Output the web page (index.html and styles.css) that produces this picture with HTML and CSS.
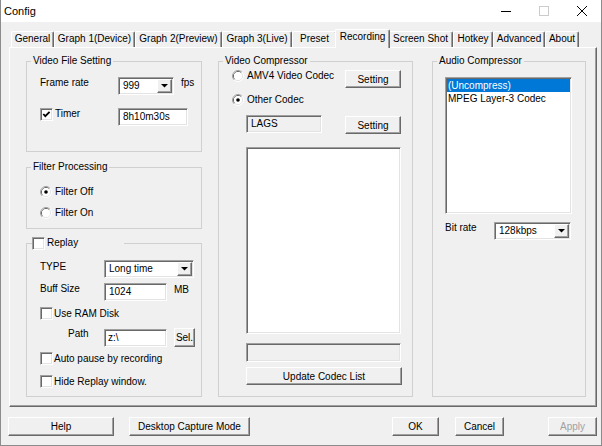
FILE: index.html
```html
<!DOCTYPE html>
<html>
<head>
<meta charset="utf-8">
<title>Config</title>
<link rel="stylesheet" href="styles.css">
</head>
<body>
<div class="window">
  <div class="titlebar">
    <span class="title">Config</span>
    <div class="controls">
      <span class="ctl"><svg width="10" height="10" viewBox="0 0 10 10"><line x1="0" y1="5.5" x2="10" y2="5.5" stroke="#000" stroke-width="1"/></svg></span>
      <span class="ctl"><svg width="10" height="10" viewBox="0 0 10 10"><rect x="0.5" y="0.5" width="9" height="9" fill="none" stroke="#cccccc" stroke-width="1"/></svg></span>
      <span class="ctl"><svg width="10" height="10" viewBox="0 0 10 10"><path d="M0 0 L10 10 M10 0 L0 10" stroke="#000" stroke-width="1"/></svg></span>
    </div>
  </div>
  <div class="content">
    <div class="tabs">
      <div class="tab t-general">General</div>
      <div class="tab t-graph1">Graph 1(Device)</div>
      <div class="tab t-graph2">Graph 2(Preview)</div>
      <div class="tab t-graph3">Graph 3(Live)</div>
      <div class="tab t-preset">Preset</div>
      <div class="tab t-recording active">Recording</div>
      <div class="tab t-shot">Screen Shot</div>
      <div class="tab t-hotkey">Hotkey</div>
      <div class="tab t-adv">Advanced</div>
      <div class="tab t-about">About</div>
    </div>
    <div class="panel">
      <div class="col-left">
        <fieldset class="group g-vfs">
          <legend>Video File Setting</legend>
          <div class="gbody">
            <div class="row r-rate">
              <span class="lbl w-rate">Frame rate</span>
              <div class="combo sunk c-fps"><span class="cval">999</span><span class="carrow"><svg width="7" height="4" viewBox="0 0 7 4"><polygon points="0,0 7,0 3.5,3.6" fill="#000"/></svg></span></div>
              <span class="lbl unit">fps</span>
            </div>
            <div class="row r-timer">
              <span class="cb sunk"><svg width="9" height="9" viewBox="0 0 9 9"><polyline points="1.3,4 3.3,6.2 7.6,1.8" fill="none" stroke="#000" stroke-width="1.8"/></svg></span>
              <span class="lbl cbl w-timer">Timer</span>
              <div class="edit sunk e-timer">8h10m30s</div>
            </div>
          </div>
        </fieldset>
        <fieldset class="group g-filter">
          <legend>Filter Processing</legend>
          <div class="gbody">
            <div class="row r-foff">
              <svg class="radio" width="12" height="12" viewBox="0 0 12 12"><path d="M2.11 9.89 A5.5 5.5 0 0 1 9.89 2.11" fill="none" stroke="#a0a0a0"/><path d="M9.89 2.11 A5.5 5.5 0 0 1 2.11 9.89" fill="none" stroke="#ffffff"/><path d="M2.82 9.18 A4.5 4.5 0 0 1 9.18 2.82" fill="none" stroke="#696969"/><path d="M9.18 2.82 A4.5 4.5 0 0 1 2.82 9.18" fill="none" stroke="#e3e3e3"/><circle cx="6" cy="6" r="4" fill="#fff"/><circle cx="6" cy="6" r="1.8" fill="#000"/></svg>
              <span class="lbl rl">Filter Off</span>
            </div>
            <div class="row r-fon">
              <svg class="radio" width="12" height="12" viewBox="0 0 12 12"><path d="M2.11 9.89 A5.5 5.5 0 0 1 9.89 2.11" fill="none" stroke="#a0a0a0"/><path d="M9.89 2.11 A5.5 5.5 0 0 1 2.11 9.89" fill="none" stroke="#ffffff"/><path d="M2.82 9.18 A4.5 4.5 0 0 1 9.18 2.82" fill="none" stroke="#696969"/><path d="M9.18 2.82 A4.5 4.5 0 0 1 2.82 9.18" fill="none" stroke="#e3e3e3"/><circle cx="6" cy="6" r="4" fill="#fff"/></svg>
              <span class="lbl rl">Filter On</span>
            </div>
          </div>
        </fieldset>
        <fieldset class="group g-replay">
          <legend class="lg-replay"><div class="lg-inner"><span class="cb sunk"></span><span class="lbl cbl">Replay</span></div></legend>
          <div class="gbody">
            <div class="row r-type">
              <span class="lbl w-rep lbl-down">TYPE</span>
              <div class="combo sunk c-type"><span class="cval">Long time</span><span class="carrow"><svg width="7" height="4" viewBox="0 0 7 4"><polygon points="0,0 7,0 3.5,3.6" fill="#000"/></svg></span></div>
            </div>
            <div class="row r-buff">
              <span class="lbl w-rep">Buff Size</span>
              <div class="edit sunk e-short">1024</div>
              <span class="lbl unit lbl-down">MB</span>
            </div>
            <div class="row r-ram">
              <span class="cb sunk"></span>
              <span class="lbl cbl cbl-tight">Use RAM Disk</span>
            </div>
            <div class="row r-path">
              <span class="lbl w-path">Path</span>
              <div class="edit sunk e-short e-path">z:\</div>
              <div class="btn b-sel">Sel.</div>
            </div>
            <div class="row r-auto">
              <span class="cb sunk"></span>
              <span class="lbl cbl cbl-tight">Auto pause by recording</span>
            </div>
            <div class="row r-hide">
              <span class="cb sunk"></span>
              <span class="lbl cbl cbl-tight">Hide Replay window.</span>
            </div>
          </div>
        </fieldset>
      </div>
      <fieldset class="group g-vc">
        <legend>Video Compressor</legend>
        <div class="gbody gbody-vc">
          <div class="row r-amv">
            <svg class="radio" width="12" height="12" viewBox="0 0 12 12"><path d="M2.11 9.89 A5.5 5.5 0 0 1 9.89 2.11" fill="none" stroke="#a0a0a0"/><path d="M9.89 2.11 A5.5 5.5 0 0 1 2.11 9.89" fill="none" stroke="#ffffff"/><path d="M2.82 9.18 A4.5 4.5 0 0 1 9.18 2.82" fill="none" stroke="#696969"/><path d="M9.18 2.82 A4.5 4.5 0 0 1 2.82 9.18" fill="none" stroke="#e3e3e3"/><circle cx="6" cy="6" r="4" fill="#fff"/></svg>
            <span class="lbl rl">AMV4 Video Codec</span>
            <div class="btn b-setting">Setting</div>
          </div>
          <div class="row r-other">
            <svg class="radio" width="12" height="12" viewBox="0 0 12 12"><path d="M2.11 9.89 A5.5 5.5 0 0 1 9.89 2.11" fill="none" stroke="#a0a0a0"/><path d="M9.89 2.11 A5.5 5.5 0 0 1 2.11 9.89" fill="none" stroke="#ffffff"/><path d="M2.82 9.18 A4.5 4.5 0 0 1 9.18 2.82" fill="none" stroke="#696969"/><path d="M9.18 2.82 A4.5 4.5 0 0 1 2.82 9.18" fill="none" stroke="#e3e3e3"/><circle cx="6" cy="6" r="4" fill="#fff"/><circle cx="6" cy="6" r="1.8" fill="#000"/></svg>
            <span class="lbl rl">Other Codec</span>
          </div>
          <div class="row r-lags">
            <div class="edit sunk ro e-lags">LAGS</div>
            <div class="btn b-setting b-setting2">Setting</div>
          </div>
          <div class="listbox sunk lb-codec"></div>
          <div class="edit sunk ro e-info"></div>
          <div class="btn b-update">Update Codec List</div>
        </div>
      </fieldset>
      <fieldset class="group g-ac">
        <legend>Audio Compressor</legend>
        <div class="gbody gbody-ac">
          <div class="listbox sunk lb-audio">
            <div class="item sel">(Uncompress)</div>
            <div class="item">MPEG Layer-3 Codec</div>
          </div>
          <div class="row r-bitrate">
            <span class="lbl w-bit">Bit rate</span>
            <div class="combo sunk c-bit"><span class="cval">128kbps</span><span class="carrow"><svg width="7" height="4" viewBox="0 0 7 4"><polygon points="0,0 7,0 3.5,3.6" fill="#000"/></svg></span></div>
          </div>
        </div>
      </fieldset>
    </div>
    <div class="buttons">
      <div class="btn b-help">Help</div>
      <div class="btn b-desktop">Desktop Capture Mode</div>
      <div class="btn b-ok">OK</div>
      <div class="btn b-cancel">Cancel</div>
      <div class="btn b-apply disabled">Apply</div>
    </div>
  </div>
</div>
</body>
</html>
```
FILE: styles.css
```css
html, body {
  margin: 0;
  padding: 0;
}
body {
  background: #f0f0f0;
  font-family: "Liberation Sans", Arial, sans-serif;
  font-size: 10px;
  color: #000;
}
.window {
  width: 602px;
  height: 446px;
  box-sizing: border-box;
  border: 1px solid #8c8c8c;
  border-top: 0;
  background: #f0f0f0;
  overflow: hidden;
}
.titlebar {
  height: 22px;
  background: #fff;
  display: flex;
  align-items: center;
}
.title {
  padding-left: 3px;
  font-size: 11px;
}
.controls {
  margin-left: auto;
  display: flex;
}
.ctl {
  width: 38px;
  height: 22px;
  display: flex;
  align-items: center;
  justify-content: center;
}
.content {
  padding: 7px 4px 0 8px;
}

/* tabs */
.tabs {
  display: flex;
  align-items: flex-end;
  height: 18px;
  margin-left: 2px;
  position: relative;
  z-index: 1;
}
.tab {
  height: 16px;
  box-sizing: border-box;
  border-top: 1px solid #fff;
  border-left: 1px solid #fff;
  border-right: 1px solid #696969;
  box-shadow: inset -1px 0 #a0a0a0;
  border-radius: 2px 2px 0 0;
  line-height: 13px;
  text-align: center;
  white-space: nowrap;
  background: #f0f0f0;
}
.tab.active {
  height: 19px;
  margin: 0 -2px -1px;
  position: relative;
  z-index: 2;
}
.t-general { width: 43px; }
.t-graph1 { width: 81px; }
.t-graph2 { width: 87px; }
.t-graph3 { width: 70px; }
.t-preset { width: 45px; }
.t-recording { width: 55px; }
.t-shot { width: 65px; }
.t-hotkey { width: 40px; }
.t-adv { width: 52px; }
.t-about { width: 34px; }

/* panel */
.panel {
  height: 360px;
  box-sizing: border-box;
  border: 1px solid;
  border-color: #fff #696969 #696969 #fff;
  box-shadow: inset -1px -1px #a0a0a0;
  display: flex;
  align-items: flex-start;
  padding: 7px 0 0 16px;
}
.col-left {
  width: 176px;
  display: flex;
  flex-direction: column;
}
.group {
  margin: 0;
  padding: 0;
  min-width: 0;
  box-sizing: border-box;
  border: 1px solid #d0d0d0;
}
.group legend {
  padding: 0 2px;
  margin-left: 4px;
  line-height: 12px;
  height: 12px;
  white-space: nowrap;
}
.g-vfs { height: 97px; }
.g-filter { height: 68px; margin-top: 9px; }
.g-replay { height: 161px; margin-top: 7px; }
.g-vc { width: 195px; height: 342px; margin-left: 16px; }
.g-ac { width: 154px; height: 342px; margin-left: 19px; }

.group legend.lg-replay {
  width: 92px;
  height: 14px;
  margin-left: 5px;
  padding: 0;
  box-sizing: border-box;
}
.lg-inner {
  display: flex;
  align-items: center;
  height: 14px;
}

.gbody {
  padding-left: 13px;
}
.gbody-vc {
  padding-right: 11px;
  display: flex;
  flex-direction: column;
}
.gbody-ac {
  padding-left: 12px;
}

.row {
  display: flex;
  align-items: flex-start;
}
.lbl {
  line-height: 12px;
  white-space: nowrap;
}
.lbl-down { margin-top: 1px; }
.unit { margin-left: 7px; }
.cbl { margin-left: 2px; }
.cbl-tight { margin-left: 1px; line-height: 13px; }
.rl { margin-left: 3px; }
.radio { flex: none; display: block; }

/* controls */
.sunk {
  box-sizing: border-box;
  border: 1px solid;
  border-color: #a0a0a0 #fff #fff #a0a0a0;
  box-shadow: inset 1px 1px #696969, inset -1px -1px #e3e3e3;
  background: #fff;
}
.cb {
  width: 13px;
  height: 13px;
  flex: none;
  display: flex;
  align-items: center;
  justify-content: center;
}
.cb svg { display: block; }
.edit {
  height: 18px;
  line-height: 16px;
  padding-left: 4px;
  white-space: nowrap;
}
.edit.ro { background: #f0f0f0; }
.combo {
  height: 18px;
  padding: 1px;
  display: flex;
}
.cval {
  flex: 1;
  line-height: 14px;
  padding-left: 3px;
  white-space: nowrap;
}
.carrow {
  width: 15px;
  height: 14px;
  box-sizing: border-box;
  border: 1px solid;
  border-color: #fff #696969 #696969 #fff;
  box-shadow: inset -1px -1px #a0a0a0;
  background: #f0f0f0;
  display: flex;
  align-items: center;
  justify-content: center;
}
.carrow svg { display: block; }
.btn {
  box-sizing: border-box;
  border: 1px solid;
  border-color: #fff #696969 #696969 #fff;
  box-shadow: inset -1px -1px #a0a0a0;
  background: #f0f0f0;
  display: flex;
  align-items: center;
  justify-content: center;
  white-space: nowrap;
  height: 18px;
}
.btn.disabled { color: #a0a0a0; }
.listbox {
  padding: 1px;
  overflow: hidden;
}
.item {
  height: 13px;
  line-height: 13px;
  padding-left: 1px;
  white-space: nowrap;
}
.item.sel {
  background: #0078d7;
  color: #fff;
}

/* Video File Setting */
.r-rate { margin-top: 10px; }
.w-rate { width: 78px; }
.c-fps { width: 56px; }
.r-timer { margin-top: 13px; }
.w-timer { width: 63px; }
.e-timer { width: 70px; }

/* Filter */
.r-foff { margin-top: 13px; }
.r-fon { margin-top: 9px; }

/* Replay */
.r-type { margin-top: 10px; }
.w-rep { width: 64px; }
.c-type { width: 90px; }
.r-buff { margin-top: 5px; }
.e-short { width: 63px; }
.r-ram { margin-top: 6px; }
.r-path { margin-top: 8px; height: 19px; }
.w-path { width: 36px; margin-left: 28px; }
.e-path { margin-top: 1px; padding-left: 3px; }
.b-sel { width: 21px; height: 19px; margin-left: 7px; }
.r-auto { margin-top: 5px; }
.r-hide { margin-top: 10px; }

/* Video Compressor */
.r-amv { margin-top: 3px; height: 18px; }
.b-setting { width: 56px; margin-left: auto; }
.r-other { margin-top: 6px; }
.r-lags { margin-top: 9px; }
.e-lags { width: 76px; margin-left: 14px; }
.b-setting2 { margin-top: 1px; }
.lb-codec { width: 155px; height: 187px; margin-top: 13px; margin-left: 14px; }
.e-info { width: 155px; height: 19px; margin-top: 9px; margin-left: 14px; }
.b-update { width: 156px; margin-top: 5px; margin-left: 14px; }

/* Audio Compressor */
.lb-audio { width: 127px; height: 137px; margin-top: 10px; }
.r-bitrate { margin-top: 8px; }
.w-bit { width: 49px; }
.c-bit { width: 77px; }

/* bottom buttons */
.buttons {
  display: flex;
  margin-top: 10px;
  margin-left: -1px;
}
.buttons .btn { height: 19px; }
.b-help { width: 106px; }
.b-desktop { width: 121px; margin-left: 15px; }
.b-ok { width: 47px; margin-left: auto; }
.b-cancel { width: 49px; margin-left: 16px; }
.b-apply { width: 49px; margin-left: 44px; }
```
